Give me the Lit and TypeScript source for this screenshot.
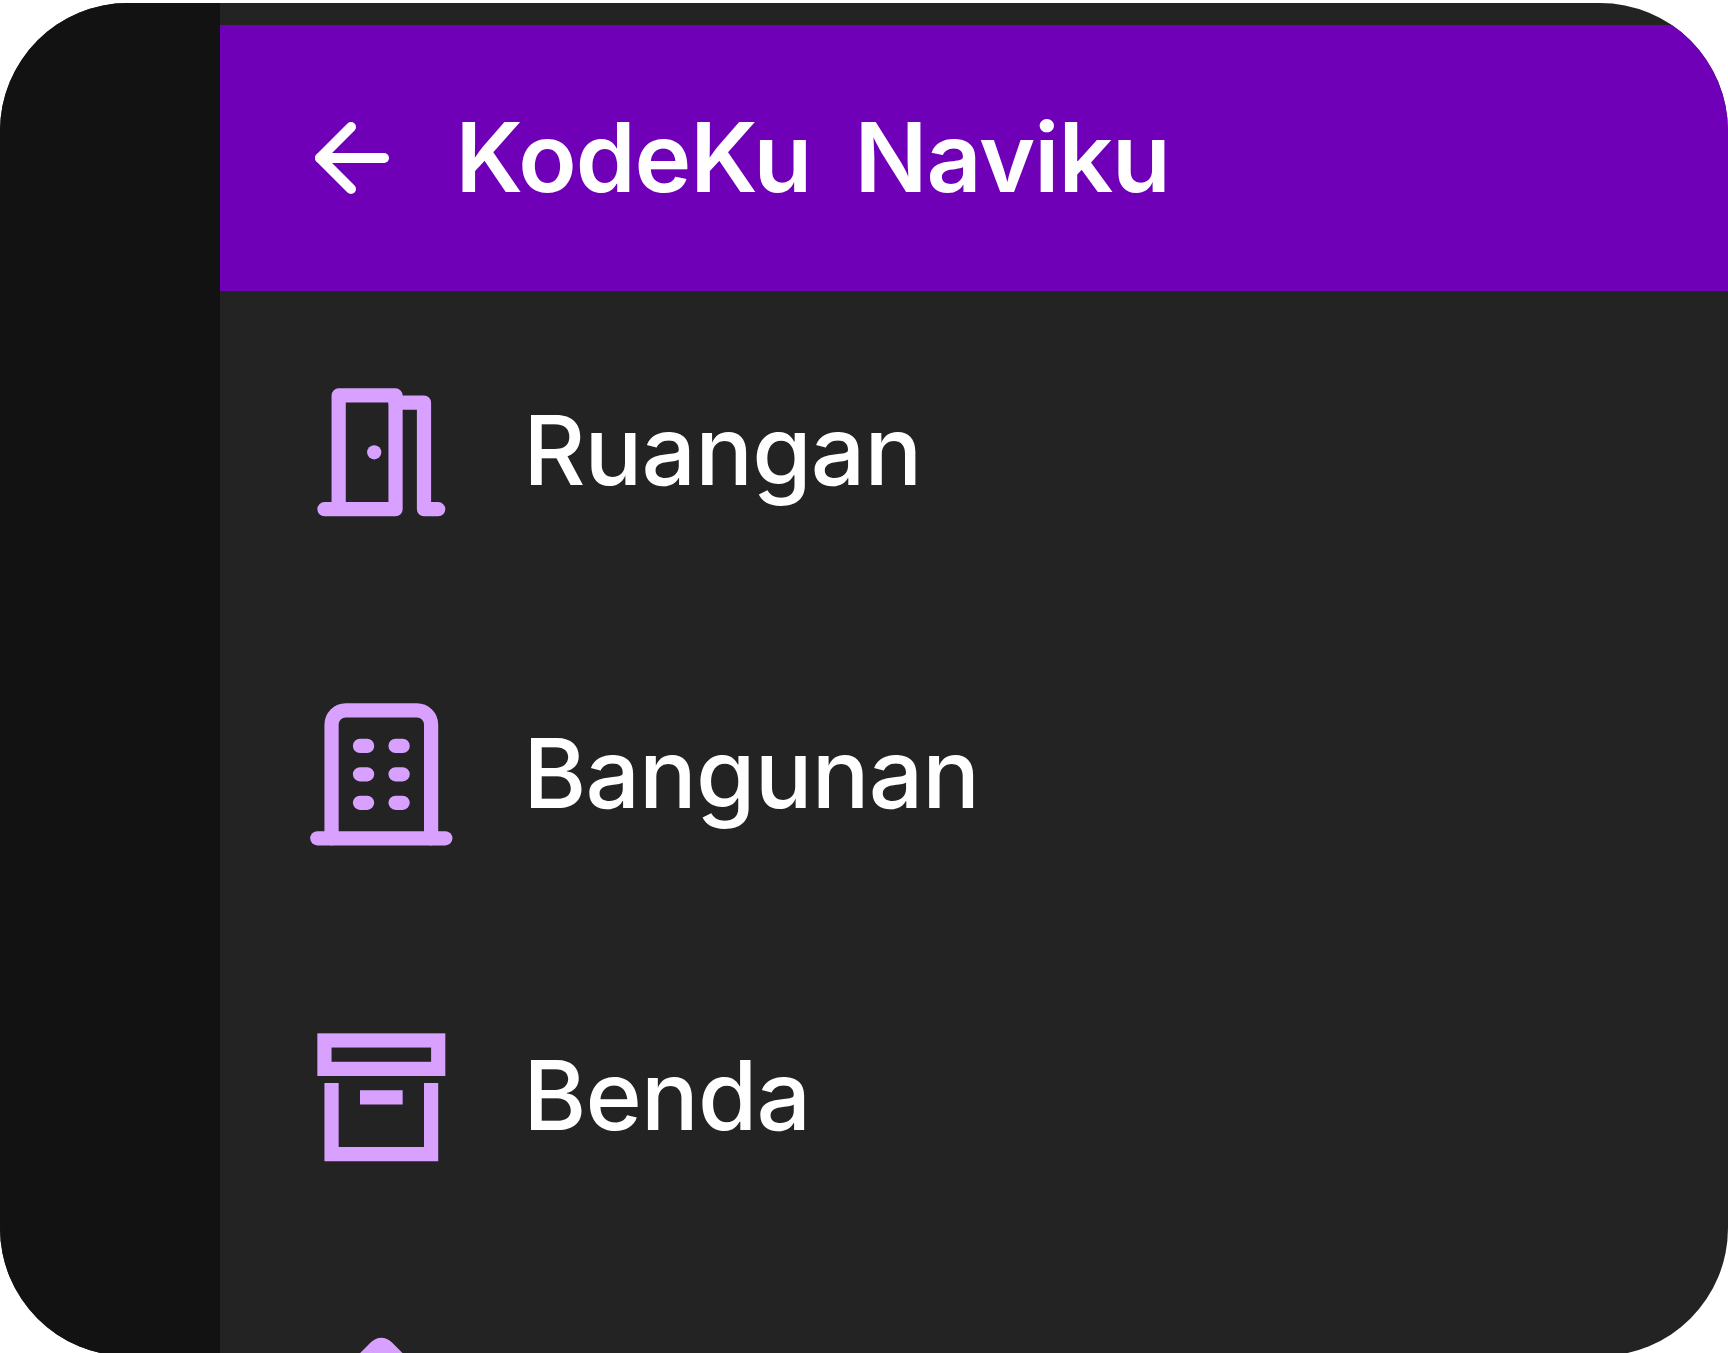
import { LitElement, html, css, svg, nothing } from 'lit';
import { customElement } from 'lit/decorators.js';

// icons share a 24 unit grid, 2 unit stroke
const ICONS = {
  door: svg`<path d="M4 20H14V4H6V20" /><path d="M14 5H18V20H20" /><circle class="fill" cx="11" cy="12" r="1" />`,
  building: svg`<path d="M3 21H21" /><path d="M5 21V5a2 2 0 0 1 2-2h10a2 2 0 0 1 2 2v16" /><path d="M9 8h1M9 12h1M9 16h1M14 8h1M14 12h1M14 16h1" />`,
  box: svg`<g class="square"><rect x="4" y="4" width="16" height="4" /><path d="M5 10V20H19V10" /><path d="M9 12H15" /></g>`,
  home: svg`<path class="solid" d="M2 10.97L11.2 1.77Q12 .97 12.8 1.77L22 10.97" />`,
};

// the fourth row runs off the bottom of the frame, only its icon tip shows
const ITEMS: { label?: string; icon: keyof typeof ICONS }[] = [
  { label: 'Ruangan', icon: 'door' },
  { label: 'Bangunan', icon: 'building' },
  { label: 'Benda', icon: 'box' },
  { icon: 'home' },
];

@customElement('app-root')
export class AppRoot extends LitElement {
  static styles = css`
    :host {
      display: block;
      height: 1353px;
      overflow: hidden;
      background: #fff;
      font-family: Inter, 'Liberation Sans', sans-serif;
      color: #fff;
    }
    .frame {
      display: flex;
      height: 1353px;
      margin-top: 3.4px;
      border-radius: 128px;
      overflow: hidden;
      background: #232323;
    }
    .rail {
      flex: 0 0 220px;
      background: #121212;
    }
    .main {
      flex: 1;
      padding-top: 21.3px;
    }
    .header {
      display: flex;
      align-items: center;
      height: 266px;
      padding-left: 94px;
      box-sizing: border-box;
      background: #7000b8;
    }
    .back {
      flex: none;
      width: 85px;
      height: 82px;
      margin-right: 56.5px;
      fill: none;
      stroke: #fff;
      stroke-width: 10;
      stroke-linecap: round;
      stroke-linejoin: round;
    }
    .title {
      font-size: 96px;
      font-weight: 600;
      line-height: 1;
      letter-spacing: -1px;
      word-spacing: 20px;
      margin-bottom: 2px;
    }
    .row {
      display: flex;
      align-items: center;
      height: 322.7px;
      padding-left: 76px;
      box-sizing: border-box;
    }
    .icon {
      flex: none;
      width: 170.67px;
      height: 170.67px;
      margin-right: 56.5px;
      fill: none;
      stroke: #d8a0ff;
      stroke-width: 2;
      stroke-linecap: round;
      stroke-linejoin: round;
    }
    .icon .fill {
      fill: #d8a0ff;
      stroke: none;
    }
    .icon .solid {
      fill: #d8a0ff;
    }
    .icon .square {
      stroke-linecap: butt;
      stroke-linejoin: miter;
    }
    .label {
      font-size: 96px;
      font-weight: 500;
      line-height: 1;
      letter-spacing: -0.8px;
      margin-bottom: 4px;
    }
  `;

  render() {
    return html`
      <div class="frame">
        <div class="rail"></div>
        <div class="main">
          <div class="header">
            <svg class="back" viewBox="0 0 85 82">
              <path d="M70 41H6" />
              <path d="M37 10L6 41L37 72" />
            </svg>
            <span class="title">KodeKu Naviku</span>
          </div>
          ${ITEMS.map(
            (item) => html`
              <div class="row">
                <svg class="icon" viewBox="0 0 24 24">${ICONS[item.icon]}</svg>
                ${item.label ? html`<span class="label">${item.label}</span>` : nothing}
              </div>
            `,
          )}
        </div>
      </div>
    `;
  }
}
